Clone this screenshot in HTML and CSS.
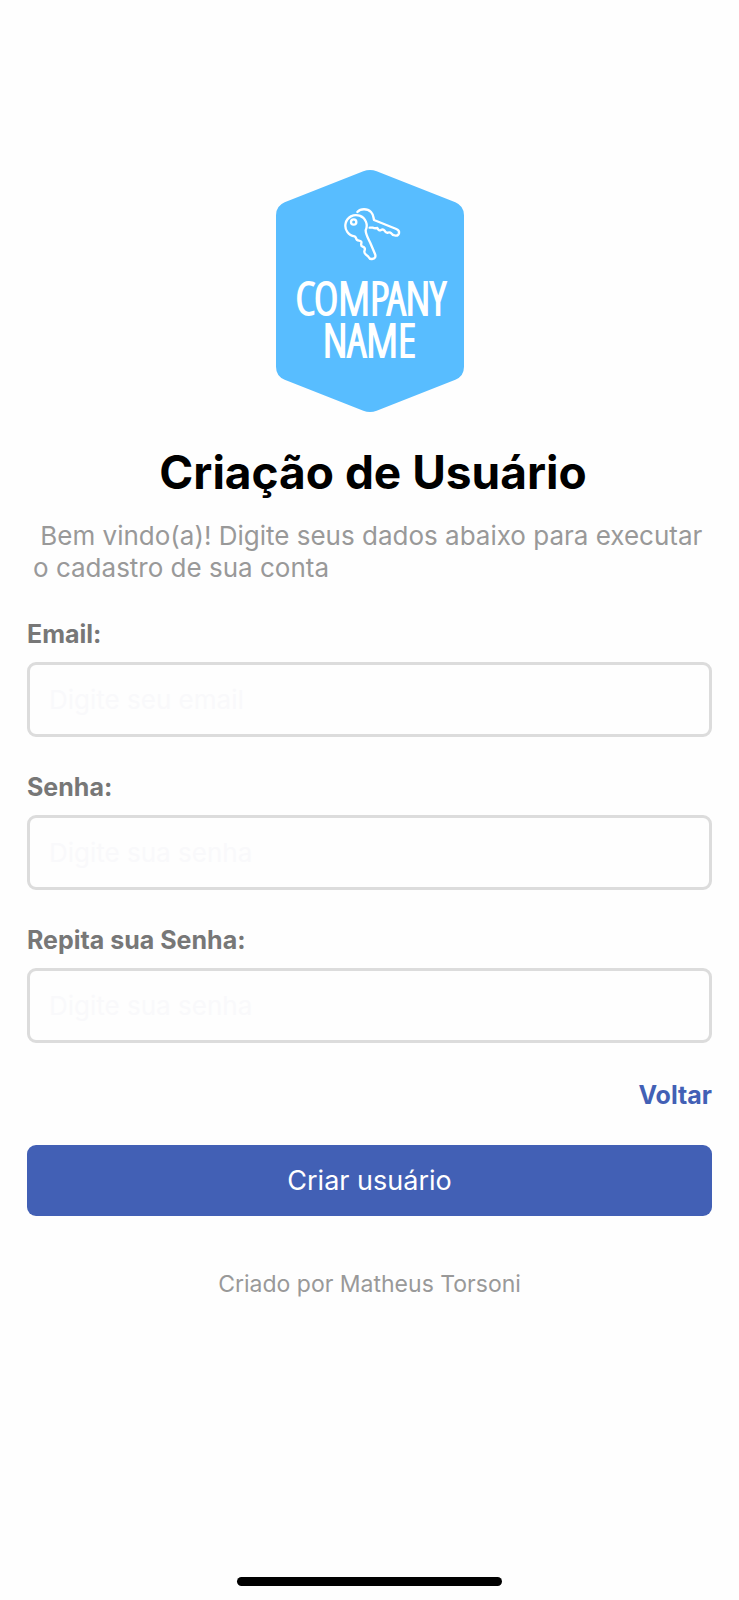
FILE: index.html
```html
<!DOCTYPE html>
<html lang="pt-BR">
<head>
<meta charset="utf-8">
<meta name="viewport" content="width=device-width, initial-scale=1">
<title>Criação de Usuário</title>
<link rel="stylesheet" href="styles.css">
</head>
<body>
<main class="screen">
  <svg class="logo" viewBox="0 0 564 726" role="img" aria-label="Company name">
    <path class="logo-shape" d="M262 4Q282 -4 302 4L538 97Q564 108 564 136V590Q564 618 538 629L302 722Q282 730 262 722L26 629Q0 618 0 590V136Q0 108 26 97Z"/>
    <g class="logo-keys">
      <path d="M269 181C269 194 275 202 283 219L297 252Q302 265 288 267Q281 268 277 260L269 253Q263 248 266 241Q269 233 260 230Q254 228 256 220Q258 213 249 212Q241 212 239 202L236 199A32 32 0 1 1 269 181Z"/>
      <circle cx="233" cy="156" r="8"/>
      <path d="M244 126C254 115 274 115 285 126C293 134 292 142 294 150L361 177Q371 181 369 190Q366 199 356 196Q350 196 346 190Q342 186 336 188Q330 190 326 182Q321 176 315 180Q309 184 304 174Q296 176 291 173L281 173"/>
    </g>
    <text class="logo-text" x="284" y="434">COMPANY</text>
    <text class="logo-text" x="280" y="562">NAME</text>
  </svg>
  <h1 class="title">Criação de Usuário</h1>
  <p class="intro">&nbsp;Bem vindo(a)! Digite seus dados abaixo para executar o cadastro de sua conta</p>
  <form class="form">
    <div class="field">
      <label class="label" for="email">Email:</label>
      <input class="input" id="email" type="email" placeholder="Digite seu email">
    </div>
    <div class="field">
      <label class="label" for="password">Senha:</label>
      <input class="input" id="password" type="password" placeholder="Digite sua senha">
    </div>
    <div class="field">
      <label class="label" for="repeat">Repita sua Senha:</label>
      <input class="input" id="repeat" type="password" placeholder="Digite sua senha">
    </div>
    <a class="back" href="#">Voltar</a>
    <button class="submit" type="submit">Criar usuário</button>
  </form>
  <p class="credit">Criado por Matheus Torsoni</p>
  <div class="home-bar"></div>
</main>
</body>
</html>
```
FILE: styles.css
```css
* {
  box-sizing: border-box;
}

body {
  margin: 0;
  background: #fefefe;
  font-family: Inter, "Liberation Sans", sans-serif;
}

.screen {
  display: flex;
  flex-direction: column;
  min-height: 100vh;
  padding: 170px 27px 14px;
}

.logo {
  align-self: center;
  width: 188px;
  height: 242px;
}

.logo-shape {
  fill: #58bdff;
}

.logo-keys {
  fill: none;
  stroke: #fff;
  stroke-width: 7;
  stroke-linecap: round;
  stroke-linejoin: round;
}

.logo-text {
  fill: #fff;
  stroke: #fff;
  stroke-width: 6;
  font-family: "Open Sans Condensed Light", "Open Sans Condensed", "Roboto Condensed", Roboto, sans-serif;
  font-size: 140px;
  font-weight: 300;
  text-anchor: middle;
}

.title {
  margin: 32px 0 0;
  padding-left: 7px;
  color: #000;
  font-size: 46px;
  font-weight: 700;
  line-height: 56px;
  text-align: center;
}

.intro {
  margin: 20px 0 0;
  padding: 0 6px;
  color: #999;
  font-size: 26px;
  line-height: 32px;
}

.form {
  display: flex;
  flex-direction: column;
  margin-top: 34px;
}

.field {
  display: flex;
  flex-direction: column;
  gap: 12px;
  margin-bottom: 34px;
}

.label,
.back {
  color: #777;
  font-size: 25px;
  font-weight: 700;
  line-height: 32px;
}

.input {
  width: 100%;
  height: 75px;
  padding: 0 19px;
  border: 3px solid #dcdcdc;
  border-radius: 9px;
  background: #fefefe;
  color: #333;
  font: inherit;
  font-size: 26px;
}

.input::placeholder {
  color: #f9f9fb;
  opacity: 1;
}

.back {
  align-self: flex-end;
  margin-top: 2px;
  color: #4260b5;
  text-decoration: none;
}

.submit {
  height: 71px;
  margin-top: 34px;
  border: 0;
  border-radius: 9px;
  background: #4260b5;
  color: #fff;
  font: inherit;
  font-size: 27px;
}

.credit {
  margin: 54px 0 0;
  color: #999;
  font-size: 23px;
  line-height: 28px;
  text-align: center;
}

.home-bar {
  align-self: center;
  width: 265px;
  height: 9px;
  margin-top: auto;
  border-radius: 5px;
  background: #000;
}
```
